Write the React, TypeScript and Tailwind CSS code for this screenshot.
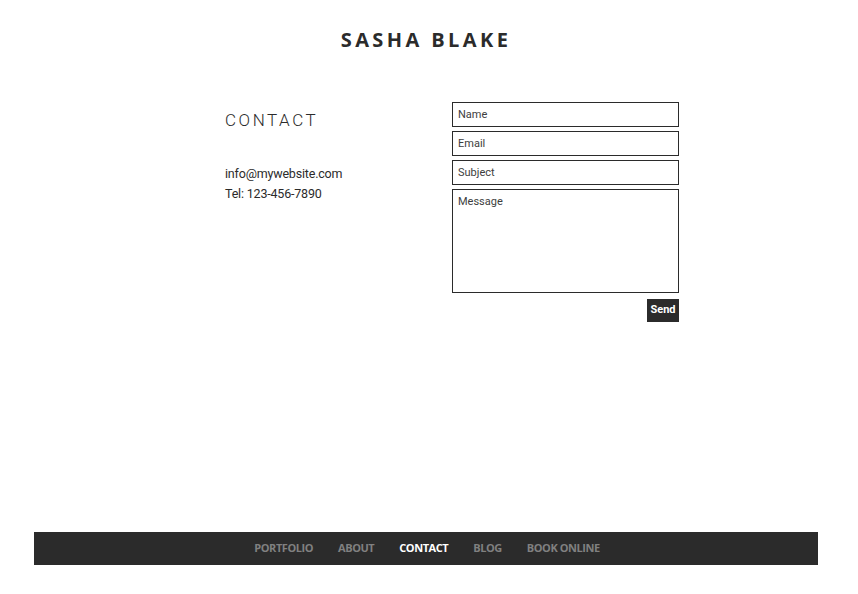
import React from "react";

export default function App() {
  const field =
    "w-full border border-[#2b2b2b] bg-white px-[5px] text-[11px] text-[#333] placeholder:text-[#3d3d3d] outline-none";
  return (
    <div className="w-[858px] h-[594px] bg-white flex flex-col">
      <div className="w-[784px] ml-[34px] flex flex-col flex-1">
        <h1
          className="mt-[26px] text-center text-[20px] leading-[27px] font-bold tracking-[0.17em] text-[#2b2b2b]"
          style={{ fontFamily: '"Open Sans", sans-serif' }}
        >
          SASHA BLAKE
        </h1>
        <div className="flex mt-[49px]" style={{ fontFamily: "Roboto, sans-serif" }}>
          <div className="ml-[191px] w-[227px] pt-[7px]">
            <h2 className="text-[17px] leading-[23px] font-light tracking-[0.15em] text-[#2b2b2b]">
              CONTACT
            </h2>
            <div className="mt-[32px] text-[12.5px] leading-[20px] tracking-[-0.015em] text-[#2b2b2b]">
              <p>info@mywebsite.com</p>
              <p>Tel: 123-456-7890</p>
            </div>
          </div>
          <div className="w-[227px] flex flex-col gap-[4px]">
            <input className={field + " h-[25px]"} placeholder="Name" />
            <input className={field + " h-[25px]"} placeholder="Email" />
            <input className={field + " h-[25px]"} placeholder="Subject" />
            <textarea
              className={field + " h-[104px] pt-[4px] resize-none"}
              placeholder="Message"
            />
            <div className="flex justify-end mt-[2px]">
              <button className="w-[32px] h-[23px] bg-[#2b2b2b] text-white text-[11px] font-bold">
                Send
              </button>
            </div>
          </div>
        </div>
        <div className="flex-1" />
        <nav
          className="h-[33px] bg-[#2b2b2b] flex items-center justify-center gap-[25px] text-[11px] font-bold tracking-[-0.04em] mb-[29px]"
          style={{ fontFamily: '"Open Sans", sans-serif' }}
        >
          <span className="text-[#808080] ml-[2px]">PORTFOLIO</span>
          <span className="text-[#808080]">ABOUT</span>
          <span className="text-white">CONTACT</span>
          <span className="text-[#808080]">BLOG</span>
          <span className="text-[#808080]">BOOK ONLINE</span>
        </nav>
      </div>
    </div>
  );
}
